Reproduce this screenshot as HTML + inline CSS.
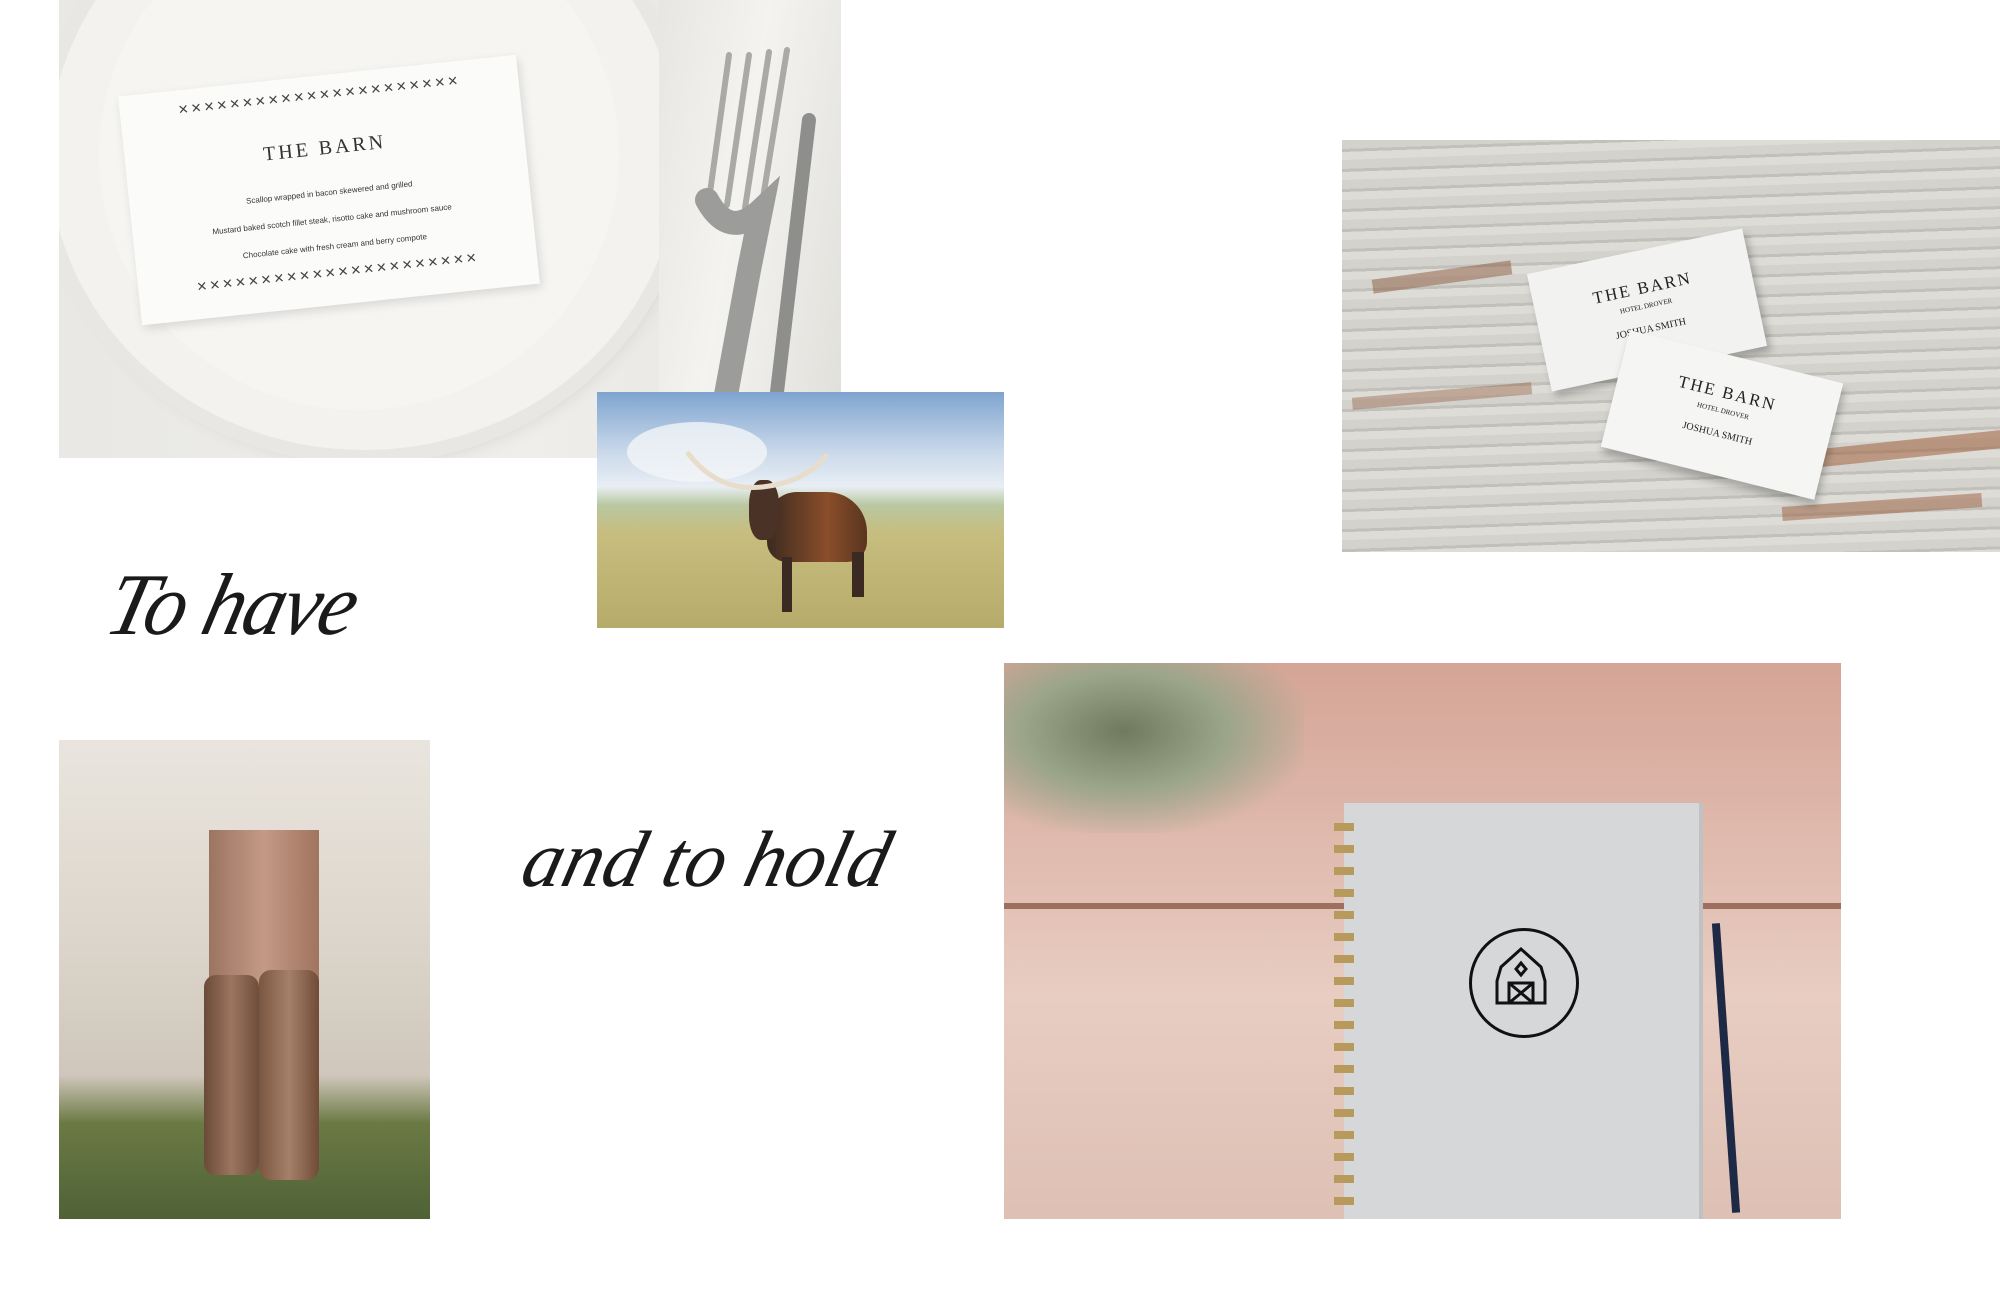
<!DOCTYPE html>
<html><head><meta charset="utf-8"><style>
html,body{margin:0;padding:0;background:#fff;width:2000px;height:1296px;overflow:hidden;position:relative;font-family:"Liberation Sans",sans-serif}
.a{position:absolute;overflow:hidden}
.script{position:absolute;font-family:"Liberation Serif",serif;font-style:italic;color:#1a1a1a;white-space:nowrap;transform-origin:left top}
</style></head><body>

<!-- menu photo -->
<div class="a" style="left:59px;top:0;width:782px;height:458px;background:linear-gradient(90deg,#e9e8e4,#efeeea 60%,#e4e3df)">
  <div style="position:absolute;left:-10px;top:-140px;width:630px;height:590px;border-radius:50%;background:#f3f2ef;box-shadow:0 0 0 14px #e8e7e3,6px 10px 20px rgba(0,0,0,.12)"></div>
  <div style="position:absolute;left:40px;top:-100px;width:520px;height:510px;border-radius:50%;background:#f6f5f2"></div>
  <div style="position:absolute;left:600px;top:0;width:200px;height:458px;background:linear-gradient(100deg,#e7e6e2,#f4f3f0 40%,#dddcd7)"></div>
  <svg style="position:absolute;left:610px;top:40px" width="150" height="420" viewBox="0 0 150 420" fill="none" stroke-linecap="round">
    <g stroke="#a9a9a7" stroke-width="6"><path d="M60 15 L40 160"/><path d="M80 15 L58 165"/><path d="M100 12 L76 168"/><path d="M118 10 L92 170"/></g>
    <path d="M38 160 Q60 200 92 170 L80 230 L45 420" stroke="#9c9c9a" stroke-width="24"/>
    <path d="M140 80 L100 420" stroke="#8e8e8c" stroke-width="14"/>
  </svg>
  <div style="position:absolute;left:70px;top:75px;width:400px;height:230px;background:#fbfbf9;transform:rotate(-6deg);box-shadow:2px 4px 10px rgba(0,0,0,.12);text-align:center;color:#333">
    <div style="margin-top:12px;font-size:13px;letter-spacing:2px;color:#444">✕✕✕✕✕✕✕✕✕✕✕✕✕✕✕✕✕✕✕✕✕✕</div>
    <div style="margin-top:34px;font-family:'Liberation Serif',serif;font-size:20px;letter-spacing:3px">THE BARN</div>
    <div style="margin-top:28px;font-size:8px">Scallop wrapped in bacon skewered and grilled</div>
    <div style="margin-top:18px;font-size:8px">Mustard baked scotch fillet steak, risotto cake and mushroom sauce</div>
    <div style="margin-top:18px;font-size:8px">Chocolate cake with fresh cream and berry compote</div>
    <div style="margin-top:14px;font-size:13px;letter-spacing:2px;color:#444">✕✕✕✕✕✕✕✕✕✕✕✕✕✕✕✕✕✕✕✕✕✕</div>
  </div>
</div>

<!-- cow -->
<div class="a" style="left:597px;top:392px;width:407px;height:236px;background:linear-gradient(180deg,#7ea4cf 0%,#c9d8ea 25%,#e8eef4 40%,#b9c7a0 48%,#c7bd7e 60%,#b6ab6a 100%)">
  <div style="position:absolute;left:30px;top:30px;width:140px;height:60px;border-radius:50%;background:#f3f5f8;opacity:.8"></div>
  <div style="position:absolute;left:170px;top:100px;width:100px;height:70px;border-radius:30px 40px 20px 20px;background:linear-gradient(90deg,#3b2a20,#8a4e2a 60%,#5a3520)"></div>
  <div style="position:absolute;left:152px;top:88px;width:30px;height:60px;border-radius:40%;background:#4a3226"></div>
  <svg style="position:absolute;left:80px;top:50px" width="200" height="60" fill="none" stroke="#e8dccb" stroke-width="5"><path d="M10 10 Q40 50 85 45 Q130 40 150 12"/></svg>
  <div style="position:absolute;left:185px;top:165px;width:10px;height:55px;background:#3a2a22"></div>
  <div style="position:absolute;left:255px;top:160px;width:12px;height:45px;background:#3a2a22"></div>
</div>

<!-- business cards -->
<div class="a" style="left:1342px;top:140px;width:658px;height:412px;background:repeating-linear-gradient(178deg,#d3d2cd 0 9px,#c2c0ba 9px 12px,#dedcd7 12px 20px)">
  <div style="position:absolute;left:30px;top:130px;width:140px;height:14px;background:#8c5a3e;opacity:.5;transform:rotate(-8deg)"></div>
  <div style="position:absolute;left:470px;top:300px;width:190px;height:18px;background:#a0603d;opacity:.55;transform:rotate(-6deg)"></div>
  <div style="position:absolute;left:440px;top:360px;width:200px;height:14px;background:#9a5d3c;opacity:.5;transform:rotate(-4deg)"></div>
  <div style="position:absolute;left:10px;top:250px;width:180px;height:12px;background:#93593b;opacity:.4;transform:rotate(-5deg)"></div>
  <div style="position:absolute;left:195px;top:110px;width:220px;height:120px;background:#f2f2f0;transform:rotate(-12deg);box-shadow:3px 6px 8px rgba(0,0,0,.25);text-align:center;font-family:'Liberation Serif',serif;color:#222">
    <div style="margin-top:28px;font-size:17px;letter-spacing:2px">THE BARN</div><div style="font-size:7px;margin-top:4px">HOTEL DROVER</div><div style="font-size:10px;margin-top:14px">JOSHUA SMITH</div></div>
  <div style="position:absolute;left:270px;top:215px;width:220px;height:120px;background:#f5f5f3;transform:rotate(14deg);box-shadow:3px 6px 8px rgba(0,0,0,.25);text-align:center;font-family:'Liberation Serif',serif;color:#222">
    <div style="margin-top:28px;font-size:17px;letter-spacing:2px">THE BARN</div><div style="font-size:7px;margin-top:4px">HOTEL DROVER</div><div style="font-size:10px;margin-top:14px">JOSHUA SMITH</div></div>
</div>

<div class="script" style="left:122px;top:555px;font-size:88px;transform:skewX(-14deg) scaleX(.95);letter-spacing:-2px">To have</div>

<!-- boots -->
<div class="a" style="left:59px;top:740px;width:371px;height:479px;background:linear-gradient(180deg,#e9e5de 0%,#ddd6cc 40%,#cfc7bb 70%,#6b7a44 80%,#4f6236 100%)">
  <div style="position:absolute;left:150px;top:90px;width:110px;height:230px;background:linear-gradient(90deg,#9b7462,#c49a86,#a0745e)"></div>
  <div style="position:absolute;left:145px;top:235px;width:55px;height:200px;border-radius:12px;background:linear-gradient(90deg,#6a4a38,#9c7560,#6e4e3b)"></div>
  <div style="position:absolute;left:200px;top:230px;width:60px;height:210px;border-radius:12px;background:linear-gradient(90deg,#7a5642,#a58068,#704c38)"></div>
</div>

<div class="script" style="left:536px;top:815px;font-size:80px;transform:skewX(-14deg);letter-spacing:0px">and to hold</div>

<!-- notebook -->
<div class="a" style="left:1004px;top:663px;width:837px;height:556px;background:linear-gradient(180deg,#d4a596 0%,#e2bfb3 40%,#e8cdc2 60%,#dec0b4 100%)">
  <div style="position:absolute;left:0;top:240px;width:837px;height:6px;background:#9c6f60"></div>
  <div style="position:absolute;left:0;top:0;width:300px;height:170px;background:radial-gradient(ellipse at 40% 40%,#6f7a5e 0%,#9aa58a 40%,rgba(210,170,155,0) 75%)"></div>
  <div style="position:absolute;left:340px;top:140px;width:355px;height:420px;background:#d5d7d9;box-shadow:4px 0 0 #bfc1c3"></div>
  <div style="position:absolute;left:330px;top:160px;width:20px;height:390px;background:repeating-linear-gradient(180deg,#b89a5c 0 8px,transparent 8px 22px)"></div>
  <div style="position:absolute;left:465px;top:265px;width:104px;height:104px;border:3px solid #111;border-radius:50%"></div>
  <svg style="position:absolute;left:485px;top:280px" width="64" height="70" viewBox="0 0 64 70" fill="none" stroke="#111" stroke-width="3"><path d="M32 6 L12 24 L8 38 L8 60 L56 60 L56 38 L52 24 Z"/><path d="M32 20 l5 6 -5 6 -5 -6 z"/><rect x="20" y="40" width="24" height="20"/><path d="M20 40 L44 60 M44 40 L20 60"/></svg>
  <div style="position:absolute;left:718px;top:260px;width:8px;height:290px;background:#1e2a45;transform:rotate(-4deg)"></div>
</div>
</body></html>
